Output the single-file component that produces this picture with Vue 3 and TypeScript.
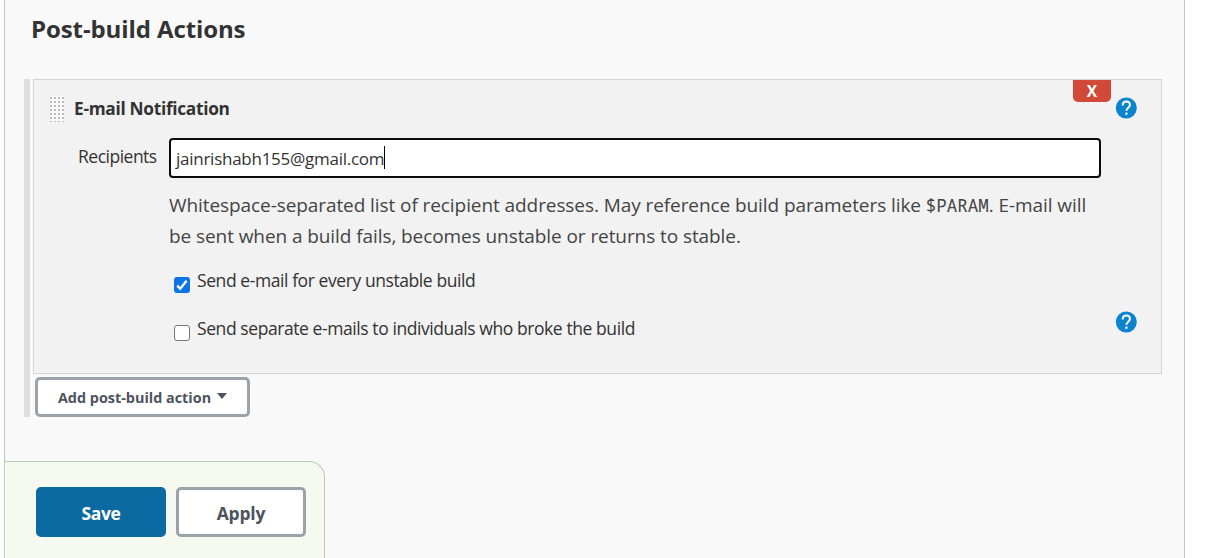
<template>
  <div class="page">
    <main class="panel">
      <h2 class="section-title">Post-build Actions</h2>

      <div class="repeated">
        <section class="chunk">
          <button class="delete" type="button">X</button>
          <header class="chunk-head">
            <span class="grip" />
            <b class="chunk-title">E-mail Notification</b>
            <HelpIcon class="help" />
          </header>

          <div class="field">
            <label class="label" for="recipients">Recipients</label>
            <div class="input"><span id="recipients" class="value">{{ recipients }}</span><i class="caret" /></div>
          </div>

          <p class="description">
            <span class="line">Whitespace-separated list of recipient addresses. May reference build parameters like <code>$PARAM</code>. E-mail will</span>
            <span class="line">be sent when a build fails, becomes unstable or returns to stable.</span>
          </p>

          <div v-for="opt in options" :key="opt.label" class="option" @click="opt.checked = !opt.checked">
            <span class="check" :class="{ on: opt.checked }">
              <svg v-if="opt.checked" viewBox="0 0 16 16" width="16" height="16">
                <path d="M3.2 8.6l3 3.1 6.4-8" fill="none" stroke="#fff" stroke-width="2.3" />
              </svg>
            </span>
            <span class="option-text">{{ opt.label }}</span>
            <HelpIcon v-if="opt.help" class="help" />
          </div>
        </section>

        <button class="btn add" type="button">
          <span>Add post-build action</span>
          <i class="arrow" />
        </button>
      </div>

      <footer class="actions">
        <button class="btn save" type="button">Save</button>
        <button class="btn apply" type="button">Apply</button>
      </footer>
    </main>
  </div>
</template>

<script setup lang="ts">
import { h, reactive, ref } from 'vue'

interface Option {
  label: string
  checked: boolean
  help: boolean
}

const recipients = ref('jainrishabh155@gmail.com')

const options = reactive<Option[]>([
  { label: 'Send e-mail for every unstable build', checked: true, help: false },
  { label: 'Send separate e-mails to individuals who broke the build', checked: false, help: true },
])

const HelpIcon = () =>
  h('svg', { viewBox: '0 0 22 22', width: 22, height: 22 }, [
    h('circle', { cx: 11.3, cy: 11, r: 10.5, fill: '#0b84d0' }),
    h('path', {
      d: 'M7.7 8.4C7.7 6 9.3 4.6 11.3 4.6s3.6 1.3 3.6 3.4c0 2.6-3.5 2.9-3.5 5.8',
      fill: 'none',
      stroke: '#fff',
      'stroke-width': 2,
    }),
    h('rect', { x: 10.3, y: 15.6, width: 2.2, height: 2.2, fill: '#fff' }),
  ])
</script>

<style>
body { margin: 0; background: #fff; overflow: hidden; }
</style>

<style scoped>
* { box-sizing: border-box; }
.page { height: 558px; padding-left: 4px; font-family: "Open Sans", "Noto Sans", sans-serif; color: #333; }
.panel { width: 1181px; height: 558px; display: flex; flex-direction: column; background: #f9f9f9; border: solid #c3c5c7; border-width: 0 1px; }
.section-title { margin: 12px 0 0 26px; height: 34px; font-size: 24px; line-height: 34px; font-weight: 700; letter-spacing: -0.1px; white-space: nowrap; }

/* repeatable block */
.repeated { margin: 33px 22px 0 19px; height: 338px; padding-left: 3px; border-left: 6px solid #dedede; }
.chunk { position: relative; height: 295px; background: #f2f2f2; border: 1px solid #d3d3d3; }
.delete { position: absolute; top: 0; right: 50px; width: 38px; height: 22px; padding: 0; border: 0; border-radius: 0 0 5px 5px; background: #d24939; color: #fff; font: 700 15.5px/22px "Open Sans", sans-serif; }
.chunk-head { display: flex; align-items: center; height: 26px; margin: 16px 24px 0 16px; }
.grip { width: 14px; height: 26px; background: radial-gradient(circle, #bdbdbd 0.9px, #f8f8f8 1.5px) -1px 0 / 4px 4px; }
.chunk-title { margin-left: 10px; font-size: 17.3px; font-weight: 700; line-height: 26px; letter-spacing: -0.3px; white-space: nowrap; }
.help { flex: none; margin-left: auto; }
.chunk-head .help { margin-top: -3px; }

.field { display: flex; margin-top: 16px; }
.label { width: 135px; padding-left: 44px; font-size: 17.5px; line-height: 37px; letter-spacing: -0.5px; white-space: nowrap; }
.input { display: flex; align-items: center; width: 932px; height: 40px; padding-left: 5px; border: 2px solid #0b0b0b; border-radius: 4px; background: #fff; font-size: 17px; letter-spacing: -0.26px; }
.value { white-space: nowrap; }
.caret { width: 1px; height: 23px; margin-top: -2px; background: #000; }

.description { margin: 12px 0 0 135px; font-size: 19px; line-height: 31px; letter-spacing: -0.08px; color: #444; }
.line { display: block; height: 31px; white-space: nowrap; }
code { font-family: "Noto Sans Mono", "DejaVu Sans Mono", monospace; font-size: 17.5px; line-height: 1; letter-spacing: 0; }

.option { display: flex; align-items: flex-start; height: 48px; margin: 0 24px 0 140px; font-size: 17.5px; line-height: 30px; letter-spacing: -0.42px; }
.description + .option { margin-top: 13px; }
.check { width: 16px; height: 16px; margin: 12px 7px 0 0; border: 1px solid #767676; border-radius: 3px; background: #fff; }
.check.on { border: 0; background: #0b75e8; }
.check svg { display: block; }
.option-text { white-space: nowrap; }
.option .help { margin-top: -2px; }

/* buttons */
.btn { display: flex; align-items: center; justify-content: center; padding: 0; border: 3px solid #9ba3aa; border-radius: 5px; background: #fff; color: #4d545d; font-family: "Open Sans", "Noto Sans", sans-serif; font-weight: 700; white-space: nowrap; }
.add { width: 215px; height: 40px; margin: 3px 0 0 2px; font-size: 14.4px; }
.arrow { margin: -2px 0 0 6px; border: solid transparent; border-width: 6px 5.5px 0; border-top-color: #4d545d; }
.actions { display: flex; gap: 10px; width: 320px; height: 97px; margin-top: 44px; padding: 25px 0 0 31px; background: #f6f9ef; border: solid #b2cdb8; border-width: 1px 1px 0 0; border-radius: 0 16px 0 0; }
.actions .btn { width: 130px; height: 50px; padding-top: 2px; font-size: 17.5px; }
.actions .apply { letter-spacing: -0.2px; }
.actions .save { border-color: #0b6aa2; background: #0b6aa2; color: #fff; letter-spacing: -0.4px; }
</style>
